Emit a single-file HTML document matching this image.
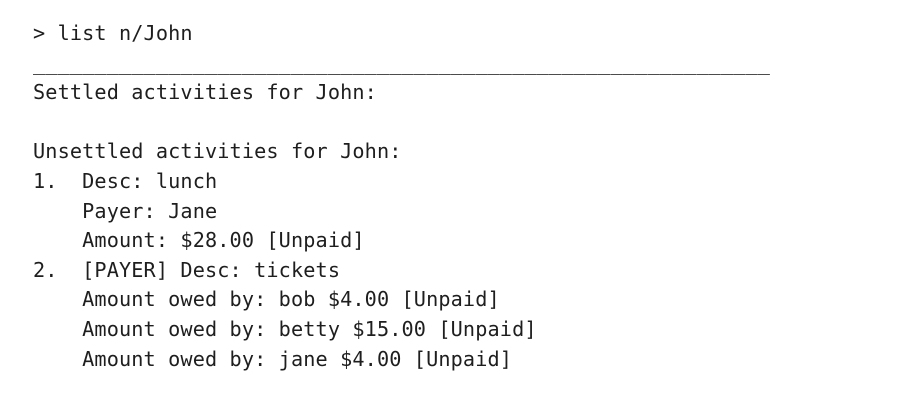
<!DOCTYPE html>
<html><head><style>
html,body{margin:0;background:#fff;width:910px;height:415px;overflow:hidden}
pre{position:absolute;left:33px;top:19px;margin:0;font-family:"DejaVu Sans Mono","Liberation Mono",monospace;font-size:20.2px;letter-spacing:0.13px;line-height:29.6px;color:#1e1e1e}
</style></head><body>
<pre>&gt; list n/John
____________________________________________________________
Settled activities for John:

Unsettled activities for John:
1.  Desc: lunch
    Payer: Jane
    Amount: $28.00 [Unpaid]
2.  [PAYER] Desc: tickets
    Amount owed by: bob $4.00 [Unpaid]
    Amount owed by: betty $15.00 [Unpaid]
    Amount owed by: jane $4.00 [Unpaid]</pre>
</body></html>
